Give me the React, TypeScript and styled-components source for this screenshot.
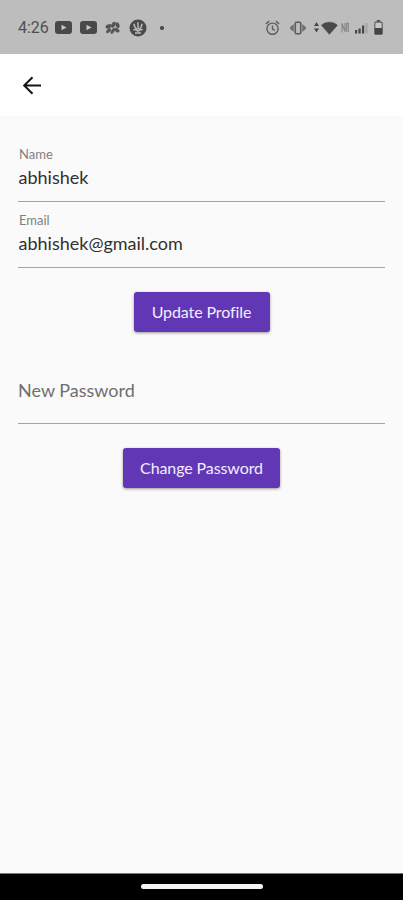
import React from "react";
import styled, { createGlobalStyle } from "styled-components";

const GlobalStyle = createGlobalStyle`
  * { box-sizing: border-box; }
  body { margin: 0; background: #fafafa; }
`;

const Screen = styled.div`
  display: flex;
  flex-direction: column;
  height: 900px;
  width: 100%;
  background: #fafafa;
  font-family: Lato, sans-serif;
  overflow: hidden;
`;

const StatusBar = styled.header`
  flex: none;
  display: flex;
  align-items: center;
  justify-content: space-between;
  height: 54px;
  padding: 1px 20px 0 18px;
  background: #bdbdbd;
`;

const StatusGroup = styled.div`
  display: flex;
  align-items: center;
  height: 20px;
`;

const Clock = styled.span`
  font: 400 16px/20px Roboto, sans-serif;
  color: #505050;
  width: 37px;
`;

const StatusIcon = styled.svg<{ $gap?: number }>`
  display: block;
  flex: none;
  margin-left: ${({ $gap = 0 }) => $gap}px;
`;

const AppBar = styled.nav`
  flex: none;
  display: flex;
  align-items: center;
  height: 62px;
  padding-left: 20px;
  background: #fff;
`;

const BackButton = styled.button`
  display: block;
  width: 24px;
  height: 24px;
  padding: 0;
  border: 0;
  background: none;
`;

const Content = styled.main`
  flex: 1;
  display: flex;
  flex-direction: column;
  padding: 20px 18px 0;
`;

const Field = styled.label`
  display: flex;
  flex-direction: column;
  height: 66px;
  padding-top: 10px;
  border-bottom: 1px solid #a3a3a3;
`;

const FieldLabel = styled.span`
  font-size: 13px;
  line-height: 16px;
  padding-left: 1px;
  color: #808080;
`;

const FieldValue = styled.span<{ $placeholder?: boolean }>`
  font-size: 18px;
  line-height: 24px;
  margin-top: ${({ $placeholder }) => ($placeholder ? 10 : 3)}px;
  padding-left: ${({ $placeholder }) => ($placeholder ? 0 : 0.5)}px;
  color: ${({ $placeholder }) => ($placeholder ? "#6f6f6f" : "#303030")};
`;

const Action = styled.button<{ $width: number }>`
  align-self: center;
  width: ${({ $width }) => $width}px;
  height: 40px;
  margin: 24px 0 26px;
  padding: 0;
  border: 0;
  border-radius: 3px;
  background: #6237b5;
  color: #f3edff;
  font: 400 16px/40px Lato, sans-serif;
  letter-spacing: -0.1px;
  box-shadow: 0 1px 3px rgba(0, 0, 0, 0.4);
`;

const NavigationBar = styled.footer`
  flex: none;
  display: flex;
  justify-content: center;
  height: 27px;
  padding-top: 10px;
  background: #000;
  border-top: 1px solid #777;
`;

const HomeHandle = styled.div`
  width: 122px;
  height: 5px;
  border-radius: 3px;
  background: #f5f5f5;
`;

const VideoIcon = ({ gap }: { gap?: number }) => (
  <StatusIcon $gap={gap} width="17" height="13" viewBox="0 0 17 13">
    <rect width="17" height="13" rx="3" fill="#494949" />
    <path d="M6.5 3.7v5.6l5-2.8z" fill="#c5c5c5" />
  </StatusIcon>
);

const PinwheelIcon = () => (
  <StatusIcon $gap={8} width="16" height="14" viewBox="0 0 16 14">
    <g fill="#555">
      <ellipse cx="3.6" cy="5.4" rx="3.2" ry="2.1" transform="rotate(-25 3.6 5.4)" />
      <ellipse cx="8.4" cy="3.7" rx="3.2" ry="1.9" transform="rotate(-65 8.4 3.7)" />
      <ellipse cx="12.5" cy="4.2" rx="3" ry="1.9" transform="rotate(70 12.5 4.2)" />
      <ellipse cx="3.6" cy="9.8" rx="3" ry="1.7" transform="rotate(-40 3.6 9.8)" />
      <ellipse cx="7.8" cy="10" rx="3.2" ry="1.6" transform="rotate(-60 7.8 10)" />
      <ellipse cx="12" cy="9.2" rx="2.9" ry="1.9" transform="rotate(35 12 9.2)" />
    </g>
  </StatusIcon>
);

const EmblemIcon = () => (
  <StatusIcon $gap={8} width="18" height="18" viewBox="0 0 18 18">
    <circle cx="9" cy="9" r="8.5" fill="#4a4a4a" />
    <path d="M9 3.2v7.3M5 4.7c.2 2.8 1 4.5 3.2 5.8M13 4.7c-.2 2.8-1 4.5-3.2 5.8M4.3 10.5c1.8 0 3 .5 4.7 1.6 1.7-1.1 2.9-1.6 4.7-1.6M6 14h6" fill="none" stroke="#c0c0c0" strokeWidth="1.4" />
  </StatusIcon>
);

const AlarmIcon = () => (
  <StatusIcon width="15" height="16" viewBox="0 0 15 16">
    <g fill="none" stroke="#5c5c5c" strokeWidth="1.4">
      <circle cx="7.5" cy="8.7" r="5.6" />
      <path d="M.8 4 4.2 1.1M14.2 4 10.8 1.1M7.5 5.4v3.6l2.4 1.4" />
    </g>
  </StatusIcon>
);

const VibrateIcon = () => (
  <StatusIcon $gap={10} width="16" height="14" viewBox="0 0 16 14">
    <rect x="5.3" y="1.2" width="5.4" height="11.6" rx="1" fill="none" stroke="#5c5c5c" strokeWidth="1.6" />
    <path d="M3.8 3v8L0 7.8V6.2zM12.2 3v8L16 7.8V6.2z" fill="#707070" />
  </StatusIcon>
);

const WifiIcon = () => (
  <StatusIcon $gap={8} width="24" height="14" viewBox="0 0 24 14">
    <path d="M2.5 1 5 5H0zM2.5 11.5 5 7.5H0z" fill="#484848" />
    <path d="M7.4 4.2C11.5.2 19.3.2 23.4 4.2L15.4 13.3z" fill="#4a4a4a" stroke="#4a4a4a" strokeWidth=".6" />
  </StatusIcon>
);

const NfcIcon = () => (
  <StatusIcon $gap={3} width="9" height="11" viewBox="0 0 9 11">
    <path d="M1 10.5V1.2L4 9.5V1M5.6 1v9M5.6 1.2h1.8v9" fill="none" stroke="#858585" strokeWidth="1.1" />
  </StatusIcon>
);

const SignalIcon = () => (
  <StatusIcon $gap={5} width="13" height="12" viewBox="0 0 13 12">
    <path d="M0 8h2.2v3.5H0zM3.5 6.5h2.2v5H3.5zM7 3.5h2.2v8H7z" fill="#454545" />
    <path d="M10.5 1h2v10.5h-2z" fill="#a2a2a2" />
  </StatusIcon>
);

const BatteryIcon = () => (
  <StatusIcon $gap={6} width="9" height="15" viewBox="0 0 9 15">
    <path d="M2.8 0h3.4v2H2.8z" fill="#555" />
    <rect x=".8" y="2.2" width="7.4" height="12" rx="1" fill="#c8c8c8" stroke="#606060" strokeWidth="1.2" />
    <path d="M.8 8h7.4v6.3H.8z" fill="#444" />
  </StatusIcon>
);

export default function App() {
  return (
    <Screen>
      <GlobalStyle />
      <StatusBar>
        <StatusGroup>
          <Clock>4:26</Clock>
          <VideoIcon />
          <VideoIcon gap={8} />
          <PinwheelIcon />
          <EmblemIcon />
          <StatusIcon $gap={12} width="6" height="6" viewBox="0 0 6 6">
            <circle cx="3" cy="3" r="2.1" fill="#444" />
          </StatusIcon>
        </StatusGroup>
        <StatusGroup>
          <AlarmIcon />
          <VibrateIcon />
          <WifiIcon />
          <NfcIcon />
          <SignalIcon />
          <BatteryIcon />
        </StatusGroup>
      </StatusBar>
      <AppBar>
        <BackButton aria-label="Back">
          <svg width="24" height="24" viewBox="0 0 24 24" fill="none" stroke="#151515" strokeWidth="2" display="block">
            <path d="M21 12.5H4.5M12.5 4.2 4.2 12.5l8.3 8.3" />
          </svg>
        </BackButton>
      </AppBar>
      <Content>
        <Field>
          <FieldLabel>Name</FieldLabel>
          <FieldValue>abhishek</FieldValue>
        </Field>
        <Field>
          <FieldLabel>Email</FieldLabel>
          <FieldValue>abhishek@gmail.com</FieldValue>
        </Field>
        <Action $width={136}>Update Profile</Action>
        <Field>
          <FieldValue $placeholder>New Password</FieldValue>
        </Field>
        <Action $width={157}>Change Password</Action>
      </Content>
      <NavigationBar>
        <HomeHandle />
      </NavigationBar>
    </Screen>
  );
}
